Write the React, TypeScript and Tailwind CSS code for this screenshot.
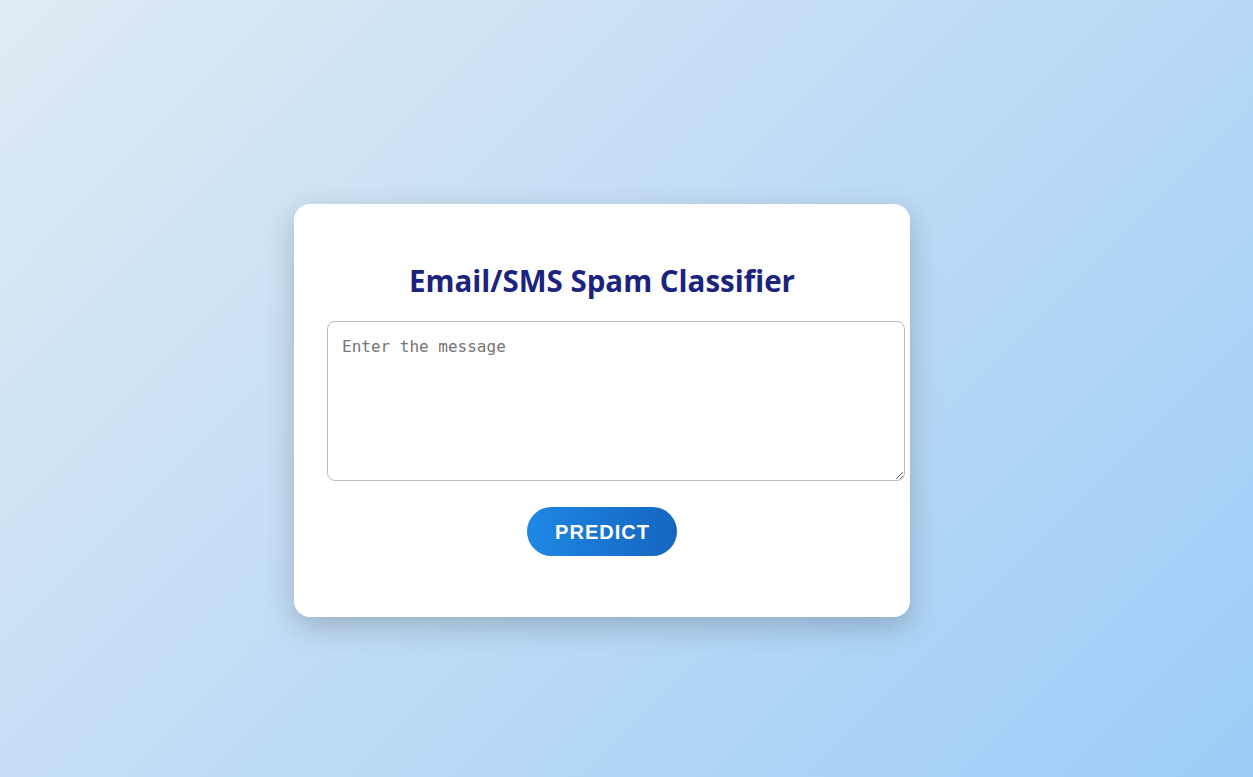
export default function App() {
  return (
    <div className="min-h-screen w-full bg-[linear-gradient(135deg,#dfeaf3_0%,#9ecdf7_100%)] pl-[294px] pt-[204px]">
      <div className="w-[616px] rounded-2xl bg-white px-8 pt-8 pb-[61px] shadow-[0_10px_30px_rgba(0,0,0,0.2)]">
        <h1 className="mt-[27px] mb-[22px] text-center font-['Open_Sans',sans-serif] text-[29.5px] leading-9 font-bold text-[#1a237e]">
          Email/SMS Spam Classifier
        </h1>
        <textarea
          placeholder="Enter the message"
          className="ml-px block h-[160px] w-[578px] rounded-lg border border-[#bdbdbd] bg-white px-[14px] pt-[13px] pb-3 font-['DejaVu_Sans_Mono',monospace] text-base text-[#333] placeholder:text-[#757575] outline-none"
        />
        <div className="mt-[26px] flex justify-center">
          <button className="h-[49px] w-[150px] rounded-full bg-[linear-gradient(90deg,#1e88e5,#1565c0)] pl-px font-['Liberation_Sans',Arial,sans-serif] text-xl font-bold tracking-[1px] text-white">
            PREDICT
          </button>
        </div>
      </div>
    </div>
  )
}
